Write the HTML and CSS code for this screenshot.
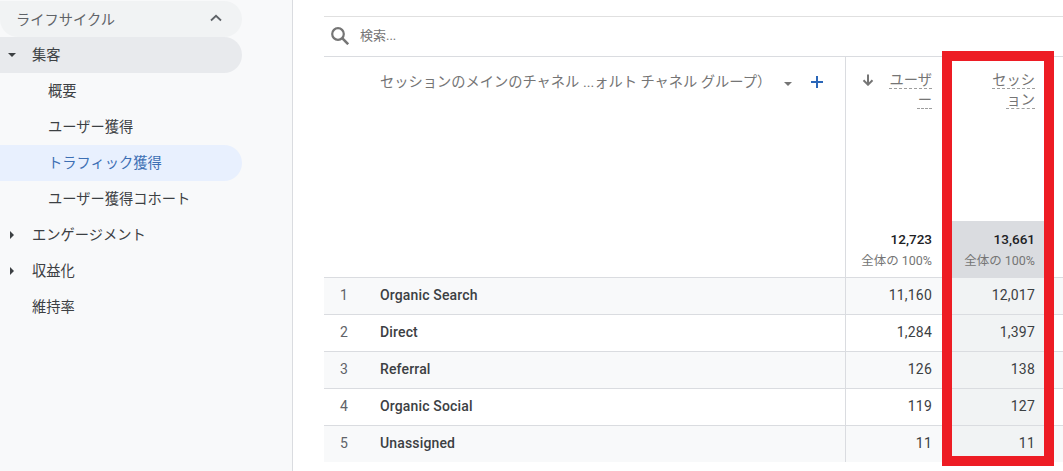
FILE: index.html
```html
<!DOCTYPE html>
<html lang="ja">

<head>
  <meta charset="UTF-8">
  <title>トラフィック獲得</title>
  <link rel="stylesheet" href="styles.css">
</head>

<body>
  <div class="page">
    <nav class="sidebar">
      <div class="nav-group">
        <span>ライフサイクル</span>
        <svg class="chevron" width="12" height="8" viewBox="0 0 12 8"><path d="M1 6.5 6 1.8l5 4.7" fill="none" stroke="#5f6368" stroke-width="1.8"/></svg>
      </div>
      <div class="nav-item nav-open"><i class="caret-down"></i>集客</div>
      <div class="nav-sub">概要</div>
      <div class="nav-sub">ユーザー獲得</div>
      <div class="nav-sub nav-active">トラフィック獲得</div>
      <div class="nav-sub">ユーザー獲得コホート</div>
      <div class="nav-item"><i class="caret-right"></i>エンゲージメント</div>
      <div class="nav-item"><i class="caret-right"></i>収益化</div>
      <div class="nav-item"><i class="caret-none"></i>維持率</div>
    </nav>

    <main class="content">
      <div class="search-row">
        <svg width="18" height="18" viewBox="0 0 18 18"><circle cx="7" cy="7" r="5.8" fill="none" stroke="#757575" stroke-width="2.2"/><path d="M11.2 11.2 17.2 17.2" stroke="#757575" stroke-width="2.6"/></svg>
        <span>検索...</span>
      </div>

      <div class="report">
        <div class="head-dim">
          <span class="head-title">セッションのメインのチャネル ...ォルト チャネル グループ）</span>
          <i class="head-caret"></i>
          <svg class="head-plus" width="12" height="12" viewBox="0 0 12 12"><path d="M6 0v12M0 6h12" stroke="#2a66b8" stroke-width="2"/></svg>
        </div>
        <div class="head-metric">
          <div class="metric-label">
            <svg class="sort-arrow" width="12" height="12" viewBox="0 0 12 12"><path d="M6 0.5v10M1.5 6.2 6 10.7l4.5-4.5" fill="none" stroke="#757575" stroke-width="2"/></svg>
            <span class="metric-name">ユーザ<br>ー</span>
          </div>
          <div class="total"><b>12,723</b><small>全体の 100%</small></div>
        </div>
        <div class="head-metric">
          <div class="metric-label"><span class="metric-name">セッシ<br>ョン</span></div>
          <div class="total total-sel"><b>13,661</b><small>全体の 100%</small></div>
        </div>

        <div class="row">
          <span class="rank">1</span><span class="channel">Organic Search</span><span class="num">11,160</span><span class="num sel">12,017</span>
        </div>
        <div class="row">
          <span class="rank">2</span><span class="channel">Direct</span><span class="num">1,284</span><span class="num sel">1,397</span>
        </div>
        <div class="row">
          <span class="rank">3</span><span class="channel">Referral</span><span class="num">126</span><span class="num sel">138</span>
        </div>
        <div class="row">
          <span class="rank">4</span><span class="channel">Organic Social</span><span class="num">119</span><span class="num sel">127</span>
        </div>
        <div class="row">
          <span class="rank">5</span><span class="channel">Unassigned</span><span class="num">11</span><span class="num sel">11</span>
        </div>
      </div>
      <div class="highlight"></div>
    </main>
  </div>
</body>

</html>
```

FILE: styles.css
```css
* {
  margin: 0;
  padding: 0;
  box-sizing: border-box;
}

html,
body {
  height: 100%;
  overflow: hidden;
}

body {
  font-family: Roboto, "Noto Sans CJK JP", sans-serif;
  color: #3c4043;
  background: #fff;
}

.page {
  display: flex;
  height: 471px;
}

/* sidebar */
.sidebar {
  width: 293px;
  flex: none;
  padding-top: 1px;
  background: #f8f9fa;
  border-right: 1px solid #dadce0;
  font-size: 14.25px;
}

.nav-group,
.nav-item,
.nav-sub {
  width: 242px;
  height: 36px;
  padding-bottom: 4px;
  display: flex;
  align-items: center;
  border-radius: 0 18px 18px 0;
}

.nav-group {
  justify-content: space-between;
  padding: 0 20px 2px 16px;
  background: #f1f3f4;
  color: #5f6368;
  border-radius: 0 18px 18px 18px;
}

.nav-item {
  padding-left: 8px;
}

.nav-sub {
  padding-left: 48px;
}

.nav-open {
  background: #e8eaed;
}

.nav-active {
  background: #e8f0fe;
  color: #3c6fb4;
}

.caret-down,
.caret-right,
.caret-none {
  width: 24px;
  flex: none;
  margin-top: 4px;
}

.caret-down::before,
.caret-right::before {
  content: "";
  display: block;
  width: 0;
  border-style: solid;
  border-color: transparent;
}

.caret-down::before {
  border-width: 4px 4px 0;
  border-top-color: #3c4043;
}

.caret-right::before {
  margin-left: 2px;
  border-width: 4px 0 4px 4px;
  border-left-color: #3c4043;
}

/* main */
.content {
  position: relative;
  flex: 1;
  padding: 16px 0 0 31px;
}

.search-row {
  height: 41px;
  display: flex;
  align-items: center;
  gap: 11px;
  padding: 0 0 2px 7px;
  border-top: 1px solid #e0e0e0;
  border-bottom: 1px solid #dadce0;
  font-size: 13px;
  color: #757575;
}

.search-row span {
  margin-bottom: 2px;
}

.report {
  display: grid;
  grid-template-columns: 56px 466px 103px 103px 1fr;
  grid-template-rows: 220px repeat(5, 37px);
}

.head-dim {
  grid-column: span 2;
  display: flex;
  align-items: flex-start;
  padding: 15px 0 0 56px;
  font-size: 14.25px;
  line-height: 20px;
  color: #757575;
  border-right: 1px solid #dadce0;
}

.head-title {
  width: 404px;
  white-space: nowrap;
}

.head-caret {
  margin: 10px 0 0 0;
  border-style: solid;
  border-color: #757575 transparent transparent;
  border-width: 4px 4px 0;
}

.head-plus {
  margin: 4px 0 0 19px;
}

.head-metric {
  display: flex;
  flex-direction: column;
  justify-content: space-between;
  font-size: 14.25px;
  color: #757575;
}

.metric-label {
  display: flex;
  justify-content: space-between;
  align-items: flex-start;
  padding: 13px 17px 0 16px;
  line-height: 20px;
  text-align: right;
}

.metric-name {
  margin-left: auto;
  text-decoration: underline dashed #9e9e9e 1px;
  text-underline-offset: 3px;
}

.sort-arrow {
  flex: none;
  margin-top: 4px;
}

.total {
  height: 56px;
  padding: 8px 17px 0 0;
  text-align: right;
}

.total-sel {
  margin-left: 3px;
  background: #dadce0;
}

.total b {
  display: block;
  font-size: 13.5px;
  line-height: 20px;
  font-weight: 500;
  color: #202124;
}

.total small {
  display: block;
  margin-top: 2px;
  font-size: 12.5px;
  line-height: 20px;
  color: #757575;
}

.row {
  display: contents;
}

.row > span,
.row::after {
  display: flex;
  align-items: center;
  padding-bottom: 2px;
  border-top: 1px solid #dadce0;
  font-size: 14px;
}

.row::after {
  content: "";
}

.row:nth-child(even) > span,
.row:nth-child(even)::after {
  background: #f8f9fa;
}

.row:nth-child(n) > .sel {
  background: #f1f3f4;
}

.rank {
  grid-column: 1;
  padding-left: 16px;
  color: #5f6368;
}

.row > .channel {
  font-weight: 500;
  color: #3c4043;
  letter-spacing: 0.15px;
  border-right: 1px solid #dadce0;
}

.num {
  justify-content: flex-end;
  padding-right: 17px;
  letter-spacing: 0.2px;
}

.highlight {
  position: absolute;
  left: 649px;
  top: 51px;
  width: 112px;
  height: 415px;
  border: 10px solid #ed1c24;
}
```
